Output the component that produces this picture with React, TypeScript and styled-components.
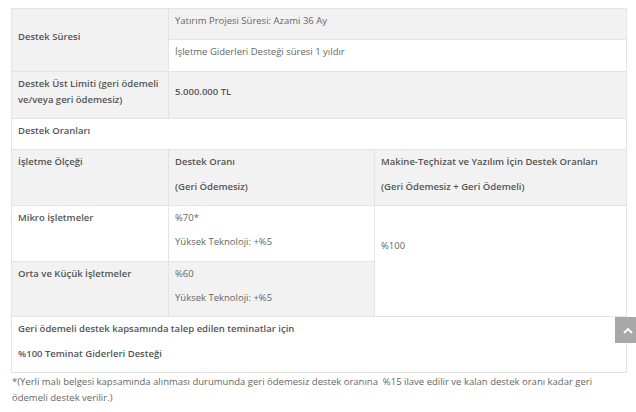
import React from 'react';
import styled, { createGlobalStyle } from 'styled-components';

const GlobalStyle = createGlobalStyle`
  html, body {
    margin: 0;
    padding: 0;
    background: #ffffff;
  }
  body {
    font-family: 'Open Sans', 'Liberation Sans', sans-serif;
    font-size: 9.5px;
    color: #666666;
  }
`;

const Page = styled.div`
  position: relative;
  width: 636px;
  height: 412px;
  overflow: hidden;
  padding: 8px 0 0 11px;
  box-sizing: border-box;
`;

const Table = styled.table`
  width: 615px;
  table-layout: fixed;
  border-collapse: collapse;
  border: 1px solid #e4e4e4;
`;

const Row = styled.tr<{ $shade?: boolean }>`
  background: ${(p) => (p.$shade ? '#f2f2f2' : '#ffffff')};
`;

const Cell = styled.td<{ $bold?: boolean; $white?: boolean }>`
  border: 1px solid #e4e4e4;
  padding: 4px 6px 2px;
  vertical-align: middle;
  font-weight: ${(p) => (p.$bold ? 600 : 400)};
  color: ${(p) => (p.$bold ? '#555555' : '#666666')};
  background: ${(p) => (p.$white ? '#ffffff' : 'inherit')};
`;

const Para = styled.p`
  margin: 0 0 8px;
  line-height: 16.3px;
`;

const Note = styled.p`
  margin: 1px 0 0 1px;
  width: 612px;
  line-height: 16.5px;
  color: #666666;
`;

const ToTop = styled.button`
  position: absolute;
  left: 615px;
  top: 317px;
  width: 25px;
  height: 26px;
  border: none;
  padding: 0;
  background: #a8a8a8;
  display: flex;
  align-items: center;
  justify-content: center;
`;

const Chevron = () => (
  <svg width="10" height="7" viewBox="0 0 10 7">
    <path d="M1 6 L5 2 L9 6" fill="none" stroke="#ffffff" strokeWidth="1.8" />
  </svg>
);

const App = (): React.ReactElement => {
  return (
    <Page>
      <GlobalStyle />
      <Table>
        <colgroup>
          <col style={{ width: 157 }} />
          <col style={{ width: 206 }} />
          <col style={{ width: 252 }} />
        </colgroup>
        <tbody>
          <Row $shade>
            <Cell $bold rowSpan={2}>
              <Para>Destek Süresi</Para>
            </Cell>
            <Cell colSpan={2}>
              <Para>Yatırım Projesi Süresi: Azami 36 Ay</Para>
            </Cell>
          </Row>
          <Row>
            <Cell colSpan={2}>
              <Para>İşletme Giderleri Desteği süresi 1 yıldır</Para>
            </Cell>
          </Row>
          <Row $shade>
            <Cell $bold>
              <Para>Destek Üst Limiti (geri ödemeli ve/veya geri ödemesiz)</Para>
            </Cell>
            <Cell $bold colSpan={2}>
              <Para>5.000.000 TL</Para>
            </Cell>
          </Row>
          <Row>
            <Cell $bold colSpan={3}>
              <Para>Destek Oranları</Para>
            </Cell>
          </Row>
          <Row $shade>
            <Cell $bold>
              <Para>İşletme Ölçeği</Para>
              <Para>&nbsp;</Para>
            </Cell>
            <Cell $bold>
              <Para>Destek Oranı</Para>
              <Para>(Geri Ödemesiz)</Para>
            </Cell>
            <Cell $bold>
              <Para>Makine-Teçhizat ve Yazılım İçin Destek Oranları</Para>
              <Para>(Geri Ödemesiz + Geri Ödemeli)</Para>
            </Cell>
          </Row>
          <Row>
            <Cell $bold>
              <Para>Mikro İşletmeler</Para>
              <Para>&nbsp;</Para>
            </Cell>
            <Cell>
              <Para>%70*</Para>
              <Para>Yüksek Teknoloji: +%5</Para>
            </Cell>
            <Cell rowSpan={2} $white>
              <Para>%100</Para>
              <Para>&nbsp;</Para>
            </Cell>
          </Row>
          <Row $shade>
            <Cell $bold>
              <Para>Orta ve Küçük İşletmeler</Para>
              <Para>&nbsp;</Para>
            </Cell>
            <Cell>
              <Para>%60</Para>
              <Para>Yüksek Teknoloji: +%5</Para>
            </Cell>
          </Row>
          <Row>
            <Cell $bold colSpan={3}>
              <Para>Geri ödemeli destek kapsamında talep edilen teminatlar için</Para>
              <Para>%100 Teminat Giderleri Desteği</Para>
            </Cell>
          </Row>
        </tbody>
      </Table>
      <Note>
        *(Yerli malı belgesi kapsamında alınması durumunda geri ödemesiz destek oranına&nbsp; %15 ilave
        edilir ve kalan destek oranı kadar geri ödemeli destek verilir.)
      </Note>
      <ToTop aria-label="Yukarı">
        <Chevron />
      </ToTop>
    </Page>
  );
};

export default App;
